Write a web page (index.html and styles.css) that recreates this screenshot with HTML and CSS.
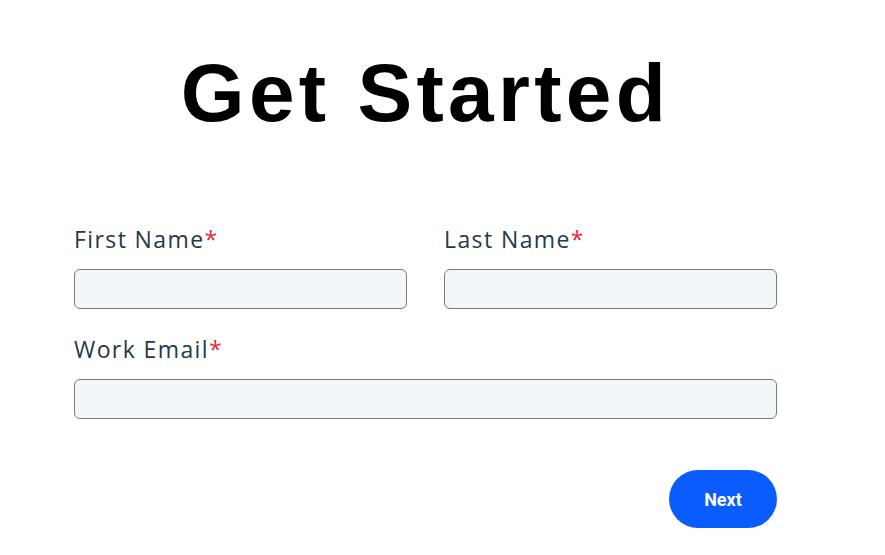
FILE: index.html
```html
<!DOCTYPE html>
<html>
<head>
<meta charset="utf-8">
<link rel="stylesheet" href="styles.css">
</head>
<body>
<main class="page">
  <h1 class="title">Get Started</h1>
  <form class="form">
    <div class="row">
      <div class="field">
        <label class="label">First Name<span class="req">*</span></label>
        <input class="input" type="text">
      </div>
      <div class="field">
        <label class="label">Last Name<span class="req">*</span></label>
        <input class="input" type="text">
      </div>
    </div>
    <div class="field">
      <label class="label">Work Email<span class="req">*</span></label>
      <input class="input" type="email">
    </div>
    <div class="actions">
      <button class="btn" type="button">Next</button>
    </div>
  </form>
</main>
</body>
</html>
```

FILE: styles.css
```css
* { box-sizing: border-box; }
html, body { margin: 0; padding: 0; background: #fff; }
.page {
  width: 703px;
  margin-left: 74px;
  padding-top: 52px;
}
.title {
  margin: 0;
  font-family: "Liberation Sans", Arial, sans-serif;
  font-weight: 700;
  font-size: 82px;
  line-height: 1;
  letter-spacing: 4.3px;
  text-align: center;
  color: #000;
}
.form {
  margin-top: 91px;
  display: flex;
  flex-direction: column;
  gap: 26px;
}
.row {
  display: grid;
  grid-template-columns: 1fr 1fr;
  column-gap: 37px;
}
.field {
  display: flex;
  flex-direction: column;
}
.label {
  font-family: "Open Sans", "Noto Sans", sans-serif;
  font-size: 23px;
  line-height: 28px;
  letter-spacing: 1.4px;
  color: #26394a;
  margin-bottom: 16px;
}
.req { color: #e8263a; }
.input {
  height: 40px;
  border: 1px solid #6e7f88;
  border-radius: 6px;
  background: #f3f6f9;
  margin: 0;
  padding: 0 12px;
}
.actions {
  display: flex;
  justify-content: flex-end;
  margin-top: 25px;
}
.btn {
  width: 108px;
  height: 58px;
  border: none;
  border-radius: 29px;
  background: #0a5cff;
  color: #fff;
  font-family: Roboto, "Liberation Sans", sans-serif;
  font-weight: 700;
  font-size: 18px;
}
```
